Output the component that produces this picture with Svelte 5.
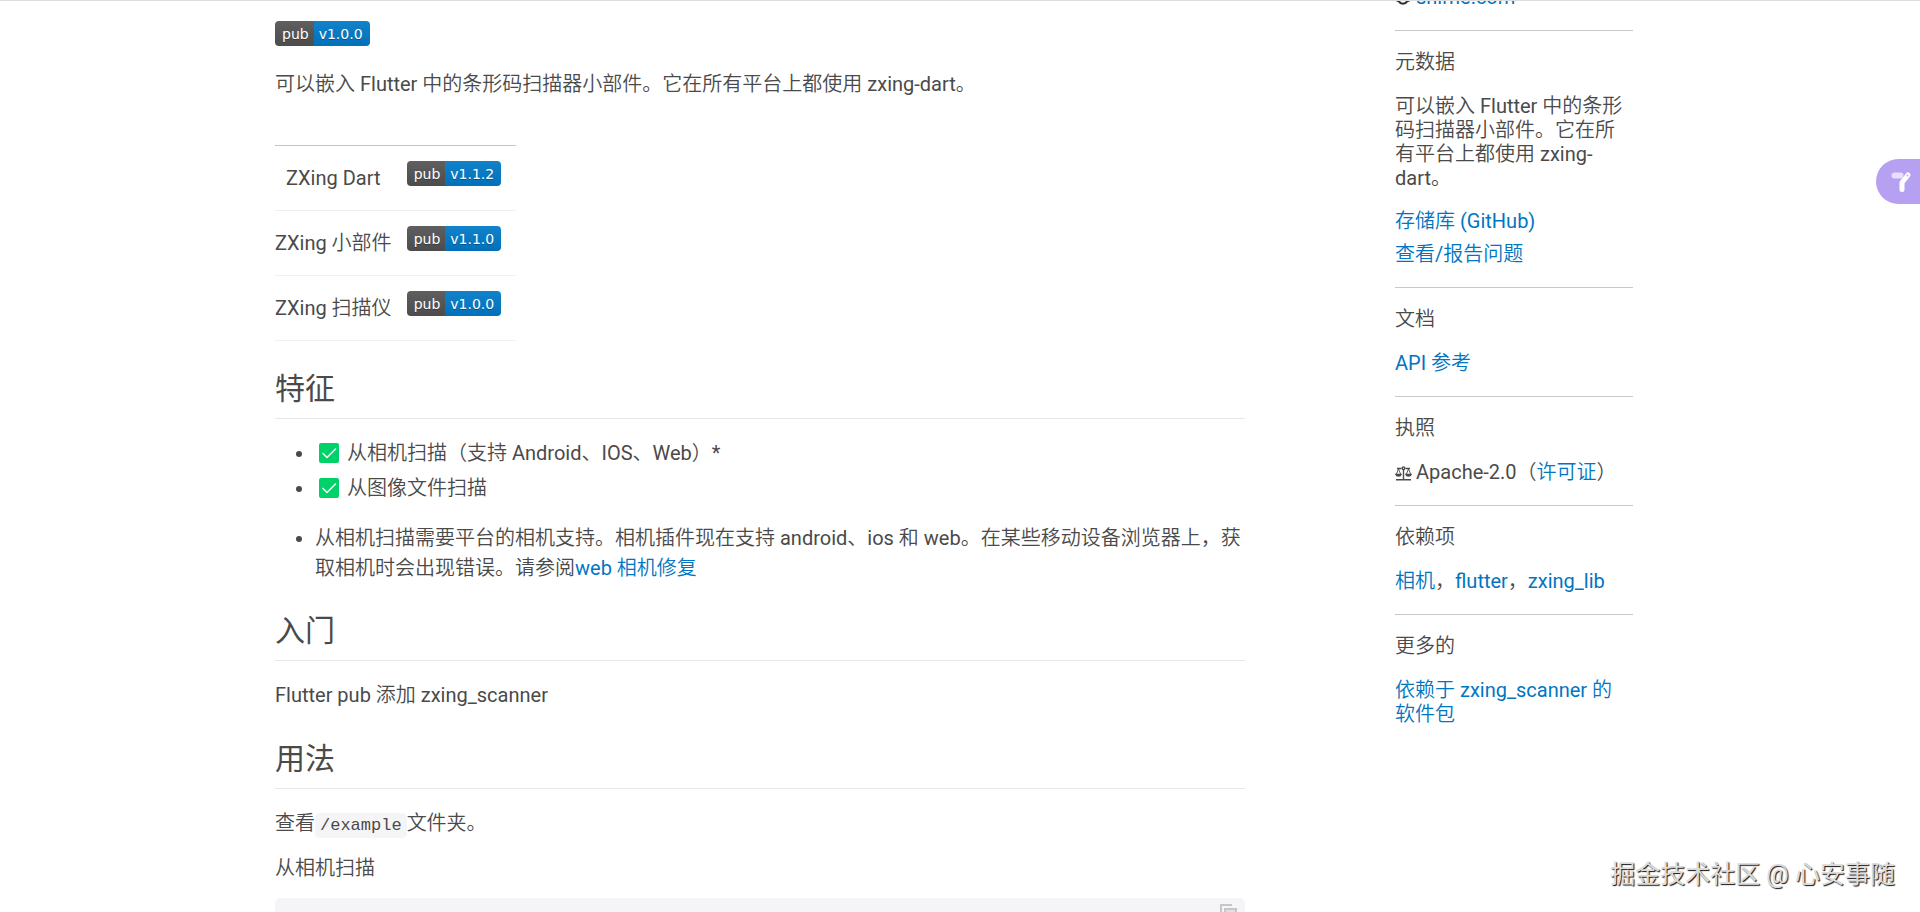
<script>
  const packages = [
    { name: 'ZXing Dart', version: 'v1.1.2' },
    { name: 'ZXing 小部件', version: 'v1.1.0' },
    { name: 'ZXing 扫描仪', version: 'v1.0.0' },
  ];

  const features = ['从相机扫描（支持 Android、IOS、Web）*', '从图像文件扫描'];
</script>

{#snippet badge(version)}
  <a class="badge" href="#pub"><span class="badge-key">pub</span><span class="badge-value">{version}</span></a>
{/snippet}

<div class="page" lang="zh-CN">
  <div class="container">
    <main>
      <div class="badge-row">{@render badge('v1.0.0')}</div>
      <p class="lead">可以嵌入 Flutter 中的条形码扫描器小部件。它在所有平台上都使用 zxing-dart。</p>

      <table>
        <thead>
          <tr>
            <th>{packages[0].name}</th>
            <th>{@render badge(packages[0].version)}</th>
          </tr>
        </thead>
        <tbody>
          {#each packages.slice(1) as pkg}
            <tr>
              <td>{pkg.name}</td>
              <td>{@render badge(pkg.version)}</td>
            </tr>
          {/each}
        </tbody>
      </table>

      <h2>特征</h2>
      <ul>
        {#each features as feature}
          <li>
            <svg class="check" viewBox="0 0 20 20" role="img" aria-label="✅">
              <rect width="20" height="20" rx="2" fill="#00d26a" />
              <path d="M4 10.5l4 4 8.5-8.5" fill="none" stroke="#f4f4f4" stroke-width="1.7" stroke-linecap="round" stroke-linejoin="round" />
            </svg>{feature}
          </li>
        {/each}
      </ul>
      <ul>
        <li>从相机扫描需要平台的相机支持。相机插件现在支持 android、ios 和 web。在某些移动设备浏览器上，获取相机时会出现错误。请参阅<a href="#web">web 相机修复</a></li>
      </ul>

      <h2>入门</h2>
      <p>Flutter pub 添加 zxing_scanner</p>

      <h2>用法</h2>
      <p>查看<code>/example</code>文件夹。</p>
      <p>从相机扫描</p>

      <div class="code-block">
        <button class="copy" aria-label="复制">
          <svg viewBox="0 0 18 20" fill="none" stroke="#c4c6c9" stroke-width="2">
            <path d="M1 15V1h11" />
            <path d="M5 5h11v14H5z" fill="#dfe0e2" />
          </svg>
        </button>
      </div>
    </main>

    <aside>
      <p class="publisher">
        <svg viewBox="0 0 16 16" fill="none" stroke="#333" stroke-width="2">
          <path d="M8 1l2 1.500 2.500-.2.7 2.400L15 6.500 14.200 9l.3 2.300-2.300.9L10.500 14 8 14.600 5.500 14l-1.700-1.800-2.300-.9L1.800 9 1 6.500l1.800-1.800.7-2.400 2.500.2z" />
        </svg>
        <a href="#publisher">shirne.com</a>
      </p>

      <section>
        <h3>元数据</h3>
        <p>可以嵌入 Flutter 中的条形码扫描器小部件。它在所有平台上都使用 zxing-dart。</p>
        <div class="links">
          <a href="#github">存储库 (GitHub)</a>
          <a href="#issues">查看/报告问题</a>
        </div>
      </section>

      <section>
        <h3>文档</h3>
        <p><a href="#api">API 参考</a></p>
      </section>

      <section>
        <h3>执照</h3>
        <p>
          <svg class="scales" viewBox="0 0 17 15" fill="none" stroke="#4a4a4a" stroke-width="1.400">
            <path d="M1 13.800h15M8.500 3v10M2 2.500h4.500M10.500 2.500H15" />
            <circle cx="8.500" cy="2.200" r="1.300" />
            <path d="M3.500 3L1.200 8.500M3.500 3l2.300 5.500M13.500 3l-2.300 5.500M13.500 3l2.300 5.500" stroke-width=".9" />
            <path d="M1 8.500c.4 2 4.600 2 5 0zM11 8.500c.4 2 4.600 2 5 0z" />
          </svg>Apache-2.0（<a href="#license">许可证</a>）
        </p>
      </section>

      <section>
        <h3>依赖项</h3>
        <p><a href="#camera">相机</a>，<a href="#flutter">flutter</a>，<a href="#zxing_lib">zxing_lib</a></p>
      </section>

      <section>
        <h3>更多的</h3>
        <p><a href="#dependents">依赖于 zxing_scanner 的<span class="nowrap">软件包</span></a></p>
      </section>
    </aside>
  </div>

  <button class="side-tab" aria-label="翻译">
    <svg viewBox="0 0 22 22">
      <path d="M12 18.500V11.500l6-7.500" fill="none" stroke="#fff" stroke-width="5" stroke-linecap="round" stroke-linejoin="round" />
      <path d="M4.500 4.500h6" stroke="#e9defc" stroke-width="6" stroke-linecap="round" />
      <circle cx="17.500" cy="4.500" r="1" fill="#c3aef3" />
    </svg>
  </button>

  <div class="watermark">掘金技术社区 @ 心安事随</div>
</div>

<style>
  :global(body) { margin: 0; background: #fff; }

  .page {
    height: 100vh; overflow: hidden; position: relative; box-sizing: border-box;
    border-top: 1px solid #ddd;
    font-family: Roboto, "Noto Sans CJK SC DemiLight", "Noto Sans CJK SC Light", "Noto Sans CJK SC", sans-serif;
    font-size: 20px; line-height: 30px; color: #4a4a4a;
  }

  .container { display: flex; max-width: 1370px; height: 100%; margin: 0 auto; gap: 150px; }

  a { color: #0175c2; text-decoration: none; }
  p { margin: 0 0 15px; }

  main { flex: 1; min-width: 0; display: flex; flex-direction: column; padding-top: 20px; }

  .badge-row { display: flex; margin-bottom: 23px; }
  .badge {
    display: inline-flex; height: 25px; overflow: hidden; vertical-align: top;
    border-radius: 4px; color: #fff;
    font: 14px/26px "DejaVu Sans", Verdana, sans-serif;
    text-shadow: 0 1px 0 rgba(1, 1, 1, 0.3);
  }
  .badge-key { padding: 0 5px 0 7px; background: linear-gradient(#5f5f5f, #4c4c4c); }
  .badge-value { padding: 0 7px 0 5px; background: linear-gradient(#1183cb, #0170b8); }

  .lead { margin-bottom: 46px; }

  table { align-self: flex-start; border-collapse: collapse; border-top: 1px solid #c2c2c7; }
  tr { border-bottom: 1px solid #f0f0f2; }
  th, td { height: 64px; padding: 0 15px 0 0; font-weight: 400; vertical-align: middle; }
  th:last-child, td:last-child { height: 49px; padding-top: 15px; vertical-align: top; }

  h2 {
    margin: 15px 0 19px; padding-bottom: 10px;
    font-family: Roboto, "Noto Sans CJK SC", sans-serif;
    font-size: 30px; line-height: 38px; font-weight: 400;
    border-bottom: 1px solid #e8e8ea;
  }
  table + h2 { margin-top: 29px; }
  ul + h2 { margin-top: 9px; }

  ul { margin: 0 0 20px; padding-left: 40px; }
  li + li { margin-top: 5px; }
  .check { width: 20px; height: 20px; margin: 0 8px 0 4px; vertical-align: -3px; }

  code {
    padding: 3px 5px; border-radius: 5px; background: #f5f5f7;
    font-family: "Liberation Mono", monospace; font-size: 17px; line-height: 20px;
  }

  .code-block {
    flex: 1; display: flex; justify-content: flex-end; align-items: flex-start;
    padding: 6px 7px 0; border-radius: 5px 5px 0 0; background: #f5f5f7;
  }
  .copy { padding: 0; border: 0; background: none; cursor: pointer; }
  .copy svg { display: block; width: 18px; height: 20px; }

  aside { width: 238px; flex-shrink: 0; margin: -16px 12px 0 0; line-height: 24px; }
  aside p { margin: 0; }
  .publisher { display: flex; align-items: center; gap: 5px; margin-bottom: 21px; }
  .publisher svg { width: 16px; height: 16px; }

  section { padding: 19px 0 21px; border-top: 1px solid #c8c8ca; }
  h3 { margin: 0 0 20px; font-size: 20px; font-weight: 400; }
  .links { display: flex; flex-direction: column; align-items: flex-start; gap: 9px; margin-top: 19px; }
  .scales { width: 17px; height: 15px; margin-right: 4px; vertical-align: -2px; }
  .nowrap { display: inline-block; }

  .side-tab {
    position: absolute; top: 158px; right: 0;
    width: 44px; height: 45px; padding: 0 0 0 14px; border: 0;
    border-radius: 23px 0 0 23px; background: #b5a0f2; cursor: pointer;
  }
  .side-tab svg { display: block; width: 22px; height: 22px; }

  .watermark {
    position: absolute; right: 25px; bottom: 22px;
    font-family: Roboto, "Noto Sans CJK SC", sans-serif;
    font-size: 25px; color: #dcdcdc; text-shadow: 1px 1px 1px #111;
  }
</style>
